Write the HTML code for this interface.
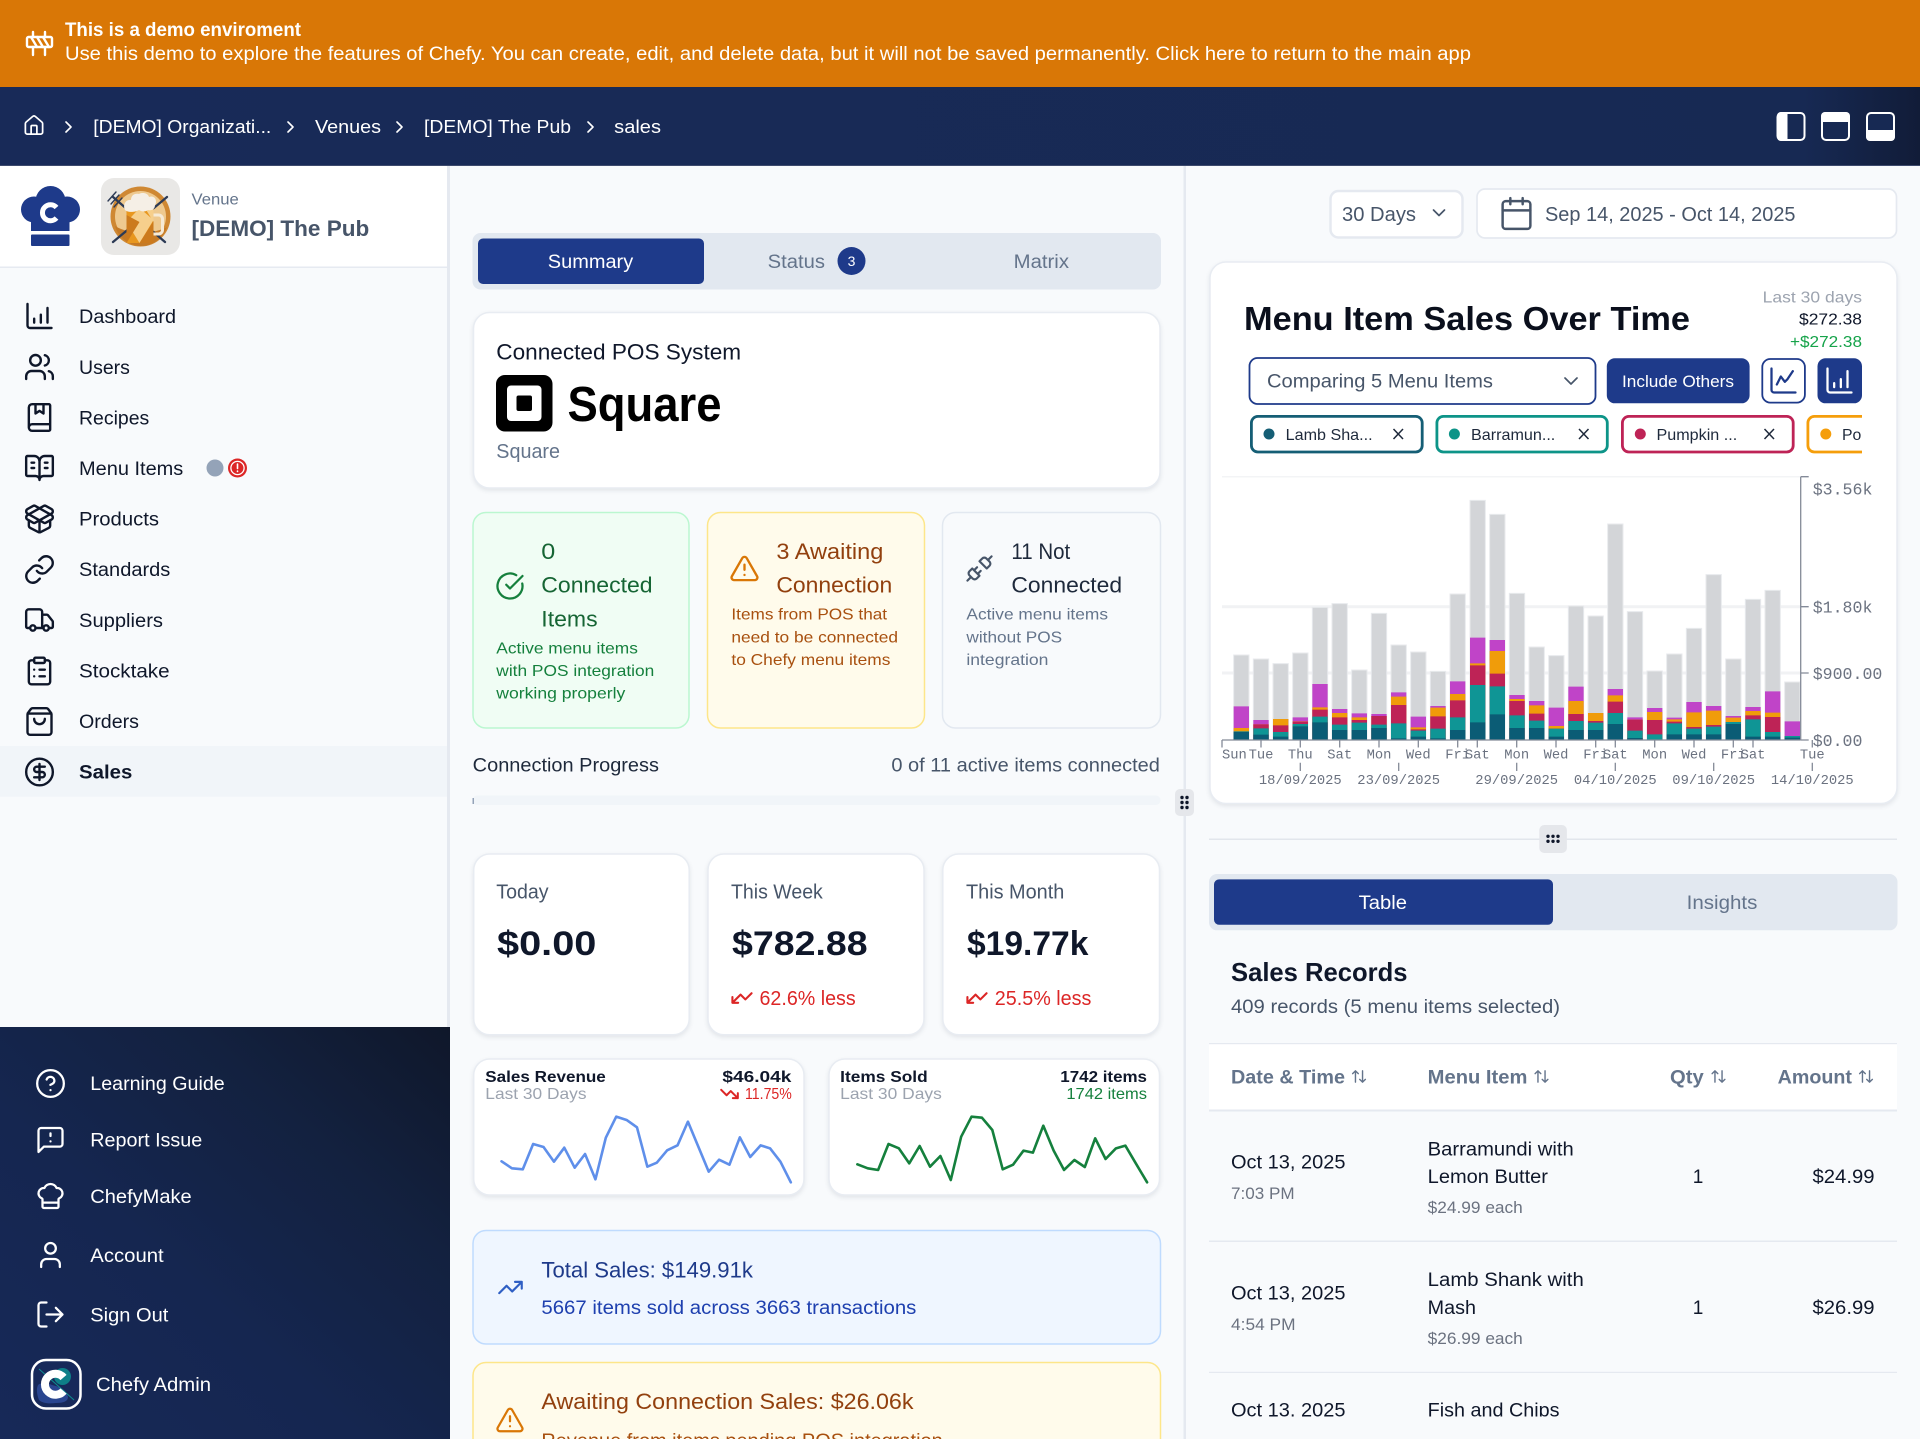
<!DOCTYPE html>
<html lang="en">
<head>
<meta charset="utf-8">
<title>Sales - The Pub</title>
<style>
html,body{margin:0;padding:0;width:1920px;height:1439px;overflow:hidden;background:#f8fafc}
svg{display:block}
text{font-family:"Liberation Sans","Noto Sans CJK SC",sans-serif;white-space:pre}
.m text{font-family:"Liberation Mono",monospace;fill:#6b7280}
.b{font-weight:700}
.i{fill:none;stroke-linecap:round;stroke-linejoin:round}
.card{fill:#fff;stroke:#e8ecf2;stroke-width:1.5;filter:drop-shadow(0 2px 2px rgba(15,23,42,.09))}
</style>
</head>
<body>
<svg xmlns="http://www.w3.org/2000/svg" width="1920" height="1439" viewBox="0 0 1920 1439">
<defs>
<linearGradient id="navg" x1="0" y1="0" x2="1" y2="0"><stop offset="0" stop-color="#182a58"/><stop offset=".94" stop-color="#172953"/><stop offset="1" stop-color="#111c38"/></linearGradient>
<linearGradient id="sideg" x1="0" y1="1" x2="1" y2="0"><stop offset="0" stop-color="#172958"/><stop offset=".4" stop-color="#152650"/><stop offset=".72" stop-color="#13213f"/><stop offset="1" stop-color="#0f172a"/></linearGradient>
<clipPath id="row3"><rect x="1209" y="1380" width="688" height="36.5"/></clipPath>
<clipPath id="chips"><rect x="1240" y="410" width="622" height="50"/></clipPath>
<symbol id="dash" viewBox="0 0 24 24"><path d="M3 3v16a2 2 0 0 0 2 2h16M8 17v-3M13 17v-6M18 17V6"/></symbol>
<symbol id="users" viewBox="0 0 24 24"><path d="M16 21v-2a4 4 0 0 0-4-4H6a4 4 0 0 0-4 4v2"/><circle cx="9" cy="7" r="4"/><path d="M22 21v-2a4 4 0 0 0-3-3.87M16 3.13a4 4 0 0 1 0 7.75"/></symbol>
<symbol id="recipe" viewBox="0 0 24 24"><path d="M9 2v7l3-2 3 2V2"/><path d="M4 19.5v-15A2.5 2.5 0 0 1 6.5 2H19a1 1 0 0 1 1 1v18a1 1 0 0 1-1 1H6.5a1 1 0 0 1 0-5H20"/></symbol>
<symbol id="menu" viewBox="0 0 24 24"><path d="M12 7v14M16 12h2M16 8h2M3 18a1 1 0 0 1-1-1V4a1 1 0 0 1 1-1h5a4 4 0 0 1 4 4 4 4 0 0 1 4-4h5a1 1 0 0 1 1 1v13a1 1 0 0 1-1 1h-6a3 3 0 0 0-3 3 3 3 0 0 0-3-3zM6 12h2M6 8h2"/></symbol>
<symbol id="pkg" viewBox="0 0 24 24"><path d="M12 22v-9"/><path d="M15.17 2.21a1.67 1.67 0 0 1 1.63 0L21 4.57a1.93 1.93 0 0 1 0 3.36L8.82 14.79a1.655 1.655 0 0 1-1.64 0L3 12.43a1.93 1.93 0 0 1 0-3.36z"/><path d="M20 13v3.87a2.06 2.06 0 0 1-1.11 1.83l-6 3.08a1.93 1.93 0 0 1-1.78 0l-6-3.08A2.06 2.06 0 0 1 4 16.87V13"/><path d="M21 12.43a1.93 1.93 0 0 0 0-3.36L8.83 2.2a1.64 1.64 0 0 0-1.63 0L3 4.57a1.93 1.93 0 0 0 0 3.36l12.18 6.86a1.636 1.636 0 0 0 1.63 0z"/></symbol>
<symbol id="link" viewBox="0 0 24 24"><path d="M10 13a5 5 0 0 0 7.54.54l3-3a5 5 0 0 0-7.07-7.07l-1.72 1.71"/><path d="M14 11a5 5 0 0 0-7.54-.54l-3 3a5 5 0 0 0 7.07 7.07l1.71-1.71"/></symbol>
<symbol id="truck" viewBox="0 0 24 24"><path d="M14 18V6a2 2 0 0 0-2-2H4a2 2 0 0 0-2 2v11a1 1 0 0 0 1 1h2M15 18H9M19 18h2a1 1 0 0 0 1-1v-3.65a1 1 0 0 0-.22-.624l-3.48-4.35A1 1 0 0 0 17.52 8H14"/><circle cx="17" cy="18" r="2"/><circle cx="7" cy="18" r="2"/></symbol>
<symbol id="clip" viewBox="0 0 24 24"><rect x="8" y="2" width="8" height="4" rx="1"/><path d="M16 4h2a2 2 0 0 1 2 2v14a2 2 0 0 1-2 2H6a2 2 0 0 1-2-2V6a2 2 0 0 1 2-2h2M12 11h4M12 16h4M8 11h.01M8 16h.01"/></symbol>
<symbol id="bag" viewBox="0 0 24 24"><path d="M16 10a4 4 0 0 1-8 0M3.103 6.034h17.794"/><path d="M3.4 5.467a2 2 0 0 0-.4 1.2V20a2 2 0 0 0 2 2h14a2 2 0 0 0 2-2V6.667a2 2 0 0 0-.4-1.2l-2-2.667A2 2 0 0 0 17 2H7a2 2 0 0 0-1.6.8z"/></symbol>
<symbol id="dollar" viewBox="0 0 24 24"><circle cx="12" cy="12" r="10"/><path d="M16 8h-6a2 2 0 1 0 0 4h4a2 2 0 1 1 0 4H8M12 18V6"/></symbol>
<symbol id="help" viewBox="0 0 24 24"><circle cx="12" cy="12" r="10"/><path d="M9.09 9a3 3 0 0 1 5.83 1c0 2-3 3-3 3M12 17h.01"/></symbol>
<symbol id="report" viewBox="0 0 24 24"><path d="M21 15a2 2 0 0 1-2 2H7l-4 4V5a2 2 0 0 1 2-2h14a2 2 0 0 1 2 2zM12 7v2M12 13h.01"/></symbol>
<symbol id="chef" viewBox="0 0 24 24"><path d="M17 21a1 1 0 0 0 1-1v-5.35c0-.457.316-.844.727-1.041a4 4 0 0 0-2.134-7.589 5 5 0 0 0-9.186 0 4 4 0 0 0-2.134 7.588c.411.198.727.585.727 1.041V20a1 1 0 0 0 1 1ZM6 17h12"/></symbol>
<symbol id="user" viewBox="0 0 24 24"><path d="M19 21v-2a4 4 0 0 0-4-4H9a4 4 0 0 0-4 4v2"/><circle cx="12" cy="7" r="4"/></symbol>
<symbol id="out" viewBox="0 0 24 24"><path d="M9 21H5a2 2 0 0 1-2-2V5a2 2 0 0 1 2-2h4M16 17l5-5-5-5M21 12H9"/></symbol>
<symbol id="home" viewBox="0 0 24 24"><path d="M15 21v-8a1 1 0 0 0-1-1h-4a1 1 0 0 0-1 1v8"/><path d="M3 10a2 2 0 0 1 .709-1.528l7-5.999a2 2 0 0 1 2.582 0l7 5.999A2 2 0 0 1 21 10v9a2 2 0 0 1-2 2H5a2 2 0 0 1-2-2z"/></symbol>
<symbol id="warn" viewBox="0 0 24 24"><path d="M21.73 18l-8-14a2 2 0 0 0-3.48 0l-8 14A2 2 0 0 0 4 21h16a2 2 0 0 0 1.73-3M12 9v4M12 17h.01"/></symbol>
<symbol id="check" viewBox="0 0 24 24"><path d="M21.801 10A10 10 0 1 1 17 3.335M9 11l3 3L22 4"/></symbol>
<symbol id="unplug" viewBox="0 0 24 24"><path d="M19 5l3-3M2 22l3-3M6.3 20.3a2.4 2.4 0 0 0 3.4 0L12 18l-6-6-2.3 2.3a2.4 2.4 0 0 0 0 3.4ZM7.5 13.5L10 11M10.5 16.5L13 14M12 6l6 6 2.3-2.3a2.4 2.4 0 0 0 0-3.4l-2.6-2.6a2.4 2.4 0 0 0-3.4 0Z"/></symbol>
<symbol id="tup" viewBox="0 0 24 24"><path d="M22 7l-8.5 8.5-5-5L2 17M16 7h6v6"/></symbol>
<symbol id="tdl" viewBox="0 0 24 24"><path d="M2 17l8.5-8.5 5 5L22 7M8 17H2v-6"/></symbol>
<symbol id="tdr" viewBox="0 0 24 24"><path d="M22 17l-8.5-8.5-5 5L2 7M16 17h6v-6"/></symbol>
<symbol id="cal" viewBox="0 0 24 24"><path d="M8 2v4M16 2v4M3 10h18"/><rect x="3" y="4" width="18" height="18" rx="2"/></symbol>
<symbol id="lchart" viewBox="0 0 24 24"><path d="M3 3v16a2 2 0 0 0 2 2h16M7 15l3-6 3 4 2-2 4-6"/></symbol>
<symbol id="bchart" viewBox="0 0 24 24"><path d="M3 3v16a2 2 0 0 0 2 2h16M8 17v-3M13 17v-6M18 17V5"/></symbol>
<symbol id="sort" viewBox="0 0 24 24"><path d="M21 16l-4 4-4-4M17 20V4M3 8l4-4 4 4M7 4v16"/></symbol>
</defs>

<!-- page -->
<rect width="1920" height="1439" fill="#f8fafc"/>

<!-- banner -->
<rect width="1920" height="87" fill="#d97706"/>
<g stroke="#fff" fill="none" stroke-width="2.4" stroke-linecap="round" stroke-linejoin="round">
<path d="M33 32v5M45 32v5M33 47v8M45 47v8"/>
<rect x="27" y="37" width="25" height="10" rx="1.5"/>
<path d="M31 37l6 10M37 37l6 10M43 37l6 10"/>
</g>
<text x="65" y="36" font-size="19" fill="#fff" class="b" textLength="236" lengthAdjust="spacingAndGlyphs">This is a demo enviroment</text>
<text x="65" y="60" font-size="19" fill="#fff" textLength="1406" lengthAdjust="spacingAndGlyphs">Use this demo to explore the features of Chefy. You can create, edit, and delete data, but it will not be saved permanently. Click here to return to the main app</text>

<!-- nav -->
<rect y="87" width="1920" height="79" fill="url(#navg)"/>
<rect y="165" width="1920" height="1" fill="#3d4a6d"/>
<use href="#home" x="22.5" y="114" width="23" height="23" class="i" stroke="#fff" stroke-width="1.8"/>
<g class="i" stroke="#fff" stroke-width="1.6">
<path d="M66 122l5 5-5 5M288 122l5 5-5 5M397 122l5 5-5 5M588 122l5 5-5 5"/>
</g>
<g font-size="18.5" fill="#fff">
<text x="93.3" y="133" textLength="178" lengthAdjust="spacingAndGlyphs">[DEMO] Organizati...</text>
<text x="315" y="133" textLength="66" lengthAdjust="spacingAndGlyphs">Venues</text>
<text x="424" y="133" textLength="147" lengthAdjust="spacingAndGlyphs">[DEMO] The Pub</text>
<text x="614.2" y="133" textLength="46.8" lengthAdjust="spacingAndGlyphs">sales</text>
</g>
<g>
<rect x="1777.5" y="113" width="27" height="27" rx="4" fill="#172953" stroke="#fff" stroke-width="2"/>
<path d="M1781 112h6.5v29H1781a4 4 0 0 1-4-4v-21a4 4 0 0 1 4-4z" fill="#fff"/>
<rect x="1822" y="113" width="27" height="27" rx="4" fill="#172953" stroke="#fff" stroke-width="2"/>
<path d="M1825 112h21a4 4 0 0 1 4 4v6h-29v-6a4 4 0 0 1 4-4z" fill="#fff"/>
<rect x="1867" y="113" width="27" height="27" rx="4" fill="#172953" stroke="#fff" stroke-width="2"/>
<path d="M1866 130h29v7a4 4 0 0 1-4 4h-21a4 4 0 0 1-4-4z" fill="#fff"/>
</g>

<!-- sidebar -->
<rect y="166" width="447" height="861" fill="#f8fafc"/>
<rect x="447" y="166" width="3" height="861" fill="#e5e9f0"/>
<rect y="166" width="447" height="101" fill="#fff"/>
<rect y="266.5" width="447" height="1.5" fill="#e6eaf1"/>
<!-- logo -->
<g fill="#1e3a8a">
<circle cx="34" cy="209.5" r="13"/><circle cx="50.5" cy="201" r="15"/><circle cx="67" cy="209.5" r="13"/>
<rect x="31" y="206" width="38.5" height="25"/>
<rect x="31" y="234.5" width="38.5" height="11.5" rx="1"/>
</g>
<path d="M56.5 207.5A8 8 0 1 0 56.5 218" fill="none" stroke="#fff" stroke-width="5"/>
<!-- venue thumbnail -->
<rect x="101" y="178" width="79" height="77" rx="13" fill="#e9e8e6"/>
<circle cx="140.5" cy="216.5" r="30" fill="#cf8833"/>
<circle cx="140.5" cy="216.5" r="25.5" fill="#eec98f"/>
<path d="M115 226c3 11 14 20 26 20s22-8 26-19c-12 7-38 8-52-1z" fill="#c57a26"/>
<g stroke="#2c3a55" stroke-width="2.3" fill="none" stroke-linecap="round">
<path d="M113 197l52 45M167 197l-54 45"/>
<path d="M108 201l8-9M111 204l8-9M114 207l8-9" stroke-width="1.4"/>
</g>
<rect x="126.5" y="208" width="27" height="35" rx="2" fill="#e8971f"/>
<path d="M126.5 222l13-14 14 12-14 23zM145 208h8.5v14z" fill="#f6cf8c"/>
<path d="M126.5 243l13-21-13-7zM153.5 243l-14 0 14-22z" fill="#cc7a1d"/>
<path d="M153.5 215h5a4 4 0 0 1 4 4v11a4 4 0 0 1-4 4h-5" fill="none" stroke="#f6ead6" stroke-width="3"/>
<path d="M125 210c-3-6 2-11 6-10 0-5 4-7 8-6 3-2 9-1 10 3 5-2 9 3 6 8 0 4-3 6-7 5-3 2-6 2-9 0-3 2-11 3-14 0z" fill="#f5efe6"/>
<text x="191.5" y="204.5" font-size="15.5" fill="#64748b" textLength="47.3" lengthAdjust="spacingAndGlyphs">Venue</text>
<text x="191.5" y="236" font-size="22" class="b" fill="#475569" textLength="177.8" lengthAdjust="spacingAndGlyphs">[DEMO] The Pub</text>

<!-- sidebar items -->
<rect y="746" width="447" height="50.7" fill="#f1f5f9"/>
<g class="i" stroke="#0f172a" stroke-width="1.8">
<use href="#dash" x="23.5" y="300" width="32" height="32"/>
<use href="#users" x="23.5" y="351" width="32" height="32"/>
<use href="#recipe" x="23.5" y="401.5" width="32" height="32"/>
<use href="#menu" x="23.5" y="452" width="32" height="32"/>
<use href="#pkg" x="23.5" y="503" width="32" height="32"/>
<use href="#link" x="23.5" y="553.5" width="32" height="32"/>
<use href="#truck" x="23.5" y="604" width="32" height="32"/>
<use href="#clip" x="23.5" y="655" width="32" height="32"/>
<use href="#bag" x="23.5" y="705.5" width="32" height="32"/>
<use href="#dollar" x="23.5" y="756" width="32" height="32"/>
</g>
<g font-size="19" fill="#0f172a">
<text x="79" y="323" textLength="97" lengthAdjust="spacingAndGlyphs">Dashboard</text>
<text x="79" y="373.8" textLength="50.9" lengthAdjust="spacingAndGlyphs">Users</text>
<text x="79" y="424.4" textLength="70.3" lengthAdjust="spacingAndGlyphs">Recipes</text>
<text x="79" y="474.9" textLength="104.3" lengthAdjust="spacingAndGlyphs">Menu Items</text>
<text x="79" y="525.5" textLength="80" lengthAdjust="spacingAndGlyphs">Products</text>
<text x="79" y="576.2" textLength="91.3" lengthAdjust="spacingAndGlyphs">Standards</text>
<text x="79" y="626.8" textLength="84" lengthAdjust="spacingAndGlyphs">Suppliers</text>
<text x="79" y="677.5" textLength="90.6" lengthAdjust="spacingAndGlyphs">Stocktake</text>
<text x="79" y="728" textLength="60" lengthAdjust="spacingAndGlyphs">Orders</text>
<text x="79" y="778.6" class="b" textLength="53.3" lengthAdjust="spacingAndGlyphs">Sales</text>
</g>
<circle cx="215" cy="468" r="8.5" fill="#94a3b8"/>
<circle cx="237.5" cy="468" r="9.5" fill="#dc2626"/>
<circle cx="237.5" cy="468" r="6.6" fill="none" stroke="#fff" stroke-width="1.3"/>
<path d="M237.5 464v4.5M237.5 471v.5" stroke="#fff" stroke-width="1.6" stroke-linecap="round"/>

<!-- sidebar bottom -->
<rect y="1027" width="450" height="412" fill="url(#sideg)"/>
<g class="i" stroke="#fff" stroke-width="1.7">
<use href="#help" x="34.5" y="1067.5" width="32" height="32"/>
<use href="#report" x="34.5" y="1124" width="32" height="32"/>
<use href="#chef" x="34.5" y="1180" width="32" height="32"/>
<use href="#user" x="34.5" y="1239" width="32" height="32"/>
<use href="#out" x="34.5" y="1298.5" width="32" height="32"/>
</g>
<g font-size="19" fill="#fff">
<text x="90.3" y="1090" textLength="134.4" lengthAdjust="spacingAndGlyphs">Learning Guide</text>
<text x="90.3" y="1146.6" textLength="112" lengthAdjust="spacingAndGlyphs">Report Issue</text>
<text x="90.3" y="1202.8" textLength="101.4" lengthAdjust="spacingAndGlyphs">ChefyMake</text>
<text x="90.3" y="1261.8" textLength="73.4" lengthAdjust="spacingAndGlyphs">Account</text>
<text x="90.3" y="1321.3" textLength="78" lengthAdjust="spacingAndGlyphs">Sign Out</text>
<text x="96" y="1391" textLength="115" lengthAdjust="spacingAndGlyphs">Chefy Admin</text>
</g>
<rect x="32" y="1360" width="48.5" height="48.5" rx="14" fill="#17295a" stroke="#fff" stroke-width="2.5"/>
<path d="M38 1385c3-3 10-2 14 0 8 2 14 4 16 12 0 4-4 6-12 6-8 1-14 0-17-3-2-5-3-11-1-15z" fill="#2a4690"/>
<circle cx="62.5" cy="1376.5" r="8.5" fill="#0e7f88"/>
<path d="M39 1369l35 31" stroke="#0e8e90" stroke-width="1"/>
<path d="M63.5 1377.5A10.5 10.5 0 1 0 63.5 1391" fill="none" stroke="#fff" stroke-width="8"/>

<!-- column divider -->
<rect x="1183.5" y="166" width="2.5" height="1273" fill="#e5e9f0"/>
<rect x="1175" y="789" width="19" height="27" rx="5" fill="#e5e7eb"/>
<g fill="#0f172a"><circle cx="1182" cy="797.5" r="1.7"/><circle cx="1187" cy="797.5" r="1.7"/><circle cx="1182" cy="802.5" r="1.7"/><circle cx="1187" cy="802.5" r="1.7"/><circle cx="1182" cy="807.5" r="1.7"/><circle cx="1187" cy="807.5" r="1.7"/></g>

<!-- tabs left -->
<rect x="472.5" y="233" width="688.5" height="56.5" rx="8" fill="#e2e8f0"/>
<rect x="478" y="238.5" width="226" height="45.5" rx="5" fill="#1e3a8a"/>
<g font-size="19">
<text x="547.8" y="268" fill="#fff" textLength="85.4" lengthAdjust="spacingAndGlyphs">Summary</text>
<text x="767.7" y="268" fill="#64748b" textLength="57.3" lengthAdjust="spacingAndGlyphs">Status</text>
<text x="1013.7" y="268" fill="#64748b" textLength="55.3" lengthAdjust="spacingAndGlyphs">Matrix</text>
</g>
<circle cx="851.5" cy="261" r="14" fill="#1e3a8a"/>
<text x="851.5" y="266" font-size="14" fill="#fff" text-anchor="middle">3</text>

<!-- POS card -->
<rect class="card" x="473.5" y="312.5" width="686.5" height="175.5" rx="16"/>
<text x="496.3" y="359.7" font-size="22" fill="#0f172a" textLength="244.8" lengthAdjust="spacingAndGlyphs">Connected POS System</text>
<rect x="496" y="375" width="56.5" height="56.5" rx="9" fill="#000"/>
<rect x="507" y="385.5" width="34.5" height="35.5" rx="4" fill="#fff"/>
<rect x="516.5" y="395.5" width="15.5" height="15.5" rx="2" fill="#000"/>
<text x="567.5" y="421" font-size="49" class="b" fill="#000" textLength="154" lengthAdjust="spacingAndGlyphs">Square</text>
<text x="496.3" y="458" font-size="20" fill="#64748b" textLength="63.7" lengthAdjust="spacingAndGlyphs">Square</text>

<!-- status cards -->
<rect x="473" y="512.5" width="216" height="215.5" rx="13" fill="#f0fdf4" stroke="#bbf7d0" stroke-width="1.5"/>
<rect x="707.5" y="512.5" width="217" height="215.5" rx="13" fill="#fffbeb" stroke="#fde68a" stroke-width="1.5"/>
<rect x="942.5" y="512.5" width="218" height="215.5" rx="13" fill="#f8fafc" stroke="#e2e8f0" stroke-width="1.5"/>
<use href="#check" x="495" y="571" width="30" height="30" class="i" stroke="#15803d" stroke-width="1.8"/>
<use href="#warn" x="729" y="553" width="31" height="31" class="i" stroke="#d97706" stroke-width="1.8"/>
<use href="#unplug" x="965" y="554" width="29" height="29" class="i" stroke="#475569" stroke-width="1.8"/>
<g font-size="22" fill="#166534">
<text x="541.3" y="559" textLength="14" lengthAdjust="spacingAndGlyphs">0</text>
<text x="541.3" y="592.7" textLength="111.3" lengthAdjust="spacingAndGlyphs">Connected</text>
<text x="541.3" y="626.6" textLength="56.3" lengthAdjust="spacingAndGlyphs">Items</text>
</g>
<g font-size="16" fill="#15803d">
<text x="496.3" y="653.7" textLength="141.6" lengthAdjust="spacingAndGlyphs">Active menu items</text>
<text x="496.3" y="676" textLength="158" lengthAdjust="spacingAndGlyphs">with POS integration</text>
<text x="496.3" y="698.7" textLength="129" lengthAdjust="spacingAndGlyphs">working properly</text>
</g>
<g font-size="22" fill="#92400e">
<text x="776.4" y="559" textLength="107" lengthAdjust="spacingAndGlyphs">3 Awaiting</text>
<text x="776.4" y="592.7" textLength="115.9" lengthAdjust="spacingAndGlyphs">Connection</text>
</g>
<g font-size="16" fill="#a8500f">
<text x="731.4" y="619.7" textLength="155.7" lengthAdjust="spacingAndGlyphs">Items from POS that</text>
<text x="731.4" y="642.3" textLength="166.6" lengthAdjust="spacingAndGlyphs">need to be connected</text>
<text x="731.4" y="665" textLength="159" lengthAdjust="spacingAndGlyphs">to Chefy menu items</text>
</g>
<g font-size="22" fill="#1e293b">
<text x="1011.4" y="559" textLength="58.8" lengthAdjust="spacingAndGlyphs">11 Not</text>
<text x="1011.4" y="592.7" textLength="110.7" lengthAdjust="spacingAndGlyphs">Connected</text>
</g>
<g font-size="16" fill="#64748b">
<text x="966.4" y="619.7" textLength="141.6" lengthAdjust="spacingAndGlyphs">Active menu items</text>
<text x="966.4" y="642.3" textLength="95.8" lengthAdjust="spacingAndGlyphs">without POS</text>
<text x="966.4" y="665" textLength="82" lengthAdjust="spacingAndGlyphs">integration</text>
</g>

<!-- progress -->
<text x="472.7" y="771.6" font-size="19" fill="#1e293b" textLength="186.3" lengthAdjust="spacingAndGlyphs">Connection Progress</text>
<text x="891.4" y="771.6" font-size="19" fill="#475569" textLength="268.5" lengthAdjust="spacingAndGlyphs">0 of 11 active items connected</text>
<rect x="472.5" y="795.5" width="688" height="9.5" rx="4.5" fill="#f1f5f9"/>
<rect x="472.5" y="798" width="1.5" height="6" fill="#94a3b8"/>

<!-- stats -->
<rect class="card" x="473.7" y="854" width="215.5" height="180.7" rx="16"/>
<rect class="card" x="708" y="854" width="216" height="180.7" rx="16"/>
<rect class="card" x="942.8" y="854" width="216.7" height="180.7" rx="16"/>
<g font-size="20" fill="#475569">
<text x="496.3" y="898.4" textLength="52.3" lengthAdjust="spacingAndGlyphs">Today</text>
<text x="731" y="898.4" textLength="91.8" lengthAdjust="spacingAndGlyphs">This Week</text>
<text x="966" y="898.4" textLength="98.3" lengthAdjust="spacingAndGlyphs">This Month</text>
</g>
<g font-size="34" class="b" fill="#0f172a">
<text x="497" y="955" textLength="99.4" lengthAdjust="spacingAndGlyphs">$0.00</text>
<text x="732" y="955" textLength="135.6" lengthAdjust="spacingAndGlyphs">$782.88</text>
<text x="967" y="955" textLength="121.4" lengthAdjust="spacingAndGlyphs">$19.77k</text>
</g>
<use href="#tdl" x="730.5" y="986.5" width="23" height="23" class="i" stroke="#dc2626" stroke-width="2.2"/>
<use href="#tdl" x="965.5" y="986.5" width="23" height="23" class="i" stroke="#dc2626" stroke-width="2.2"/>
<g font-size="20" fill="#dc2626">
<text x="759.5" y="1005" textLength="96.2" lengthAdjust="spacingAndGlyphs">62.6% less</text>
<text x="994.8" y="1005" textLength="96.6" lengthAdjust="spacingAndGlyphs">25.5% less</text>
</g>

<!-- spark cards -->
<rect class="card" x="473.7" y="1059" width="330.3" height="136" rx="16"/>
<rect class="card" x="829" y="1059" width="330.5" height="136" rx="16"/>
<g font-size="16">
<text x="485.3" y="1082" class="b" fill="#0f172a" textLength="120.5" lengthAdjust="spacingAndGlyphs">Sales Revenue</text>
<text x="485.3" y="1099" fill="#9ca3af" textLength="101.2" lengthAdjust="spacingAndGlyphs">Last 30 Days</text>
<text x="722.4" y="1082" class="b" fill="#0f172a" textLength="69" lengthAdjust="spacingAndGlyphs">$46.04k</text>
<text x="745" y="1099" fill="#dc2626" textLength="46.8" lengthAdjust="spacingAndGlyphs">11.75%</text>
<text x="840.2" y="1082" class="b" fill="#0f172a" textLength="87.5" lengthAdjust="spacingAndGlyphs">Items Sold</text>
<text x="840.2" y="1099" fill="#9ca3af" textLength="101.6" lengthAdjust="spacingAndGlyphs">Last 30 Days</text>
<text x="1060.3" y="1082" class="b" fill="#0f172a" textLength="86.7" lengthAdjust="spacingAndGlyphs">1742 items</text>
<text x="1066.4" y="1099" fill="#15803d" textLength="80.6" lengthAdjust="spacingAndGlyphs">1742 items</text>
</g>
<use href="#tdr" x="719.5" y="1084" width="20" height="20" class="i" stroke="#dc2626" stroke-width="2.4"/>
<g transform="translate(460 840) scale(.47191 .33333)" fill="none" stroke-linejoin="round" stroke-linecap="round">
<polyline vector-effect="non-scaling-stroke" stroke="#5f8fea" stroke-width="2.6" points="88,964 110,985 133,988 155,912 177,921 199,965 221,923 243,983 265,942 287,1018 309,893 331,830 353,840 375,862 397,980 417,968 439,931 461,916 483,845 505,920 527,995 549,959 571,974 593,892 615,951 637,916 657,925 679,965 701,1027"/>
<polyline vector-effect="non-scaling-stroke" stroke="#15803d" stroke-width="2.6" points="842,973 864,985 886,990 908,912 930,925 952,970 974,918 996,980 1018,948 1040,1020 1062,890 1084,830 1106,833 1128,870 1150,988 1172,974 1194,932 1214,938 1236,857 1258,932 1280,990 1302,960 1324,981 1346,895 1368,957 1390,925 1410,917 1432,970 1456,1027"/>
</g>

<!-- info cards -->
<rect x="473" y="1230.5" width="687.5" height="113.5" rx="13" fill="#eff6ff" stroke="#bfdbfe" stroke-width="1.5"/>
<use href="#tup" x="497" y="1274" width="27" height="27" class="i" stroke="#2f5fc4" stroke-width="1.9"/>
<text x="541.4" y="1277.5" font-size="22" fill="#1e3a8a" textLength="211.6" lengthAdjust="spacingAndGlyphs">Total Sales: $149.91k</text>
<text x="541.4" y="1314.2" font-size="19" fill="#1e40af" textLength="375" lengthAdjust="spacingAndGlyphs">5667 items sold across 3663 transactions</text>
<rect x="473" y="1362.5" width="687.5" height="110" rx="13" fill="#fffbeb" stroke="#fde68a" stroke-width="1.5"/>
<use href="#warn" x="495" y="1405" width="30" height="30" class="i" stroke="#d97706" stroke-width="1.8"/>
<text x="541.4" y="1409" font-size="22" fill="#92400e" textLength="372.1" lengthAdjust="spacingAndGlyphs">Awaiting Connection Sales: $26.06k</text>
<text x="541.4" y="1447" font-size="19" fill="#a8500f" textLength="401.3" lengthAdjust="spacingAndGlyphs">Revenue from items pending POS integration</text>

<!-- right: date controls -->
<rect x="1330.5" y="191" width="132" height="46.5" rx="8" fill="#fff" stroke="#e5e9f0" stroke-width="2.5"/>
<text x="1342" y="221" font-size="20" fill="#475569" textLength="74" lengthAdjust="spacingAndGlyphs">30 Days</text>
<path d="M1433.5 210l5.5 5.5 5.5-5.5" class="i" stroke="#475569" stroke-width="1.7"/>
<rect x="1477" y="189" width="419.5" height="49" rx="8" fill="#fff" stroke="#e5e9f0" stroke-width="1.7"/>
<use href="#cal" x="1498" y="195" width="37" height="37" class="i" stroke="#475569" stroke-width="1.6"/>
<text x="1545" y="221" font-size="20" fill="#475569" textLength="250.5" lengthAdjust="spacingAndGlyphs">Sep 14, 2025 - Oct 14, 2025</text>

<!-- right: chart card -->
<rect class="card" x="1210" y="262" width="687" height="541.5" rx="16"/>
<text x="1244" y="330" font-size="33.5" class="b" fill="#0a0f1c" textLength="446" lengthAdjust="spacingAndGlyphs">Menu Item Sales Over Time</text>
<text x="1762.7" y="302.3" font-size="16" fill="#9ca3af" textLength="99.3" lengthAdjust="spacingAndGlyphs">Last 30 days</text>
<text x="1799" y="324.5" font-size="16" fill="#0f172a" textLength="63" lengthAdjust="spacingAndGlyphs">$272.38</text>
<text x="1790" y="347" font-size="16" fill="#16a34a" textLength="72" lengthAdjust="spacingAndGlyphs">+$272.38</text>

<rect x="1249.5" y="358" width="346" height="46" rx="8" fill="#fff" stroke="#1e3a8a" stroke-width="1.8"/>
<text x="1267" y="387.6" font-size="19" fill="#475569" textLength="226" lengthAdjust="spacingAndGlyphs">Comparing 5 Menu Items</text>
<path d="M1565 378l6 6 6-6" class="i" stroke="#475569" stroke-width="1.7"/>
<rect x="1606.8" y="358.3" width="142.8" height="45" rx="8" fill="#1e3a8a"/>
<text x="1622" y="387" font-size="16.5" fill="#fff" textLength="112" lengthAdjust="spacingAndGlyphs">Include Others</text>
<rect x="1762.3" y="359" width="42.6" height="43.6" rx="8" fill="#fff" stroke="#1e3a8a" stroke-width="1.8"/>
<use href="#lchart" x="1767.5" y="364.5" width="32" height="32" class="i" stroke="#1e3a8a" stroke-width="1.7"/>
<rect x="1817.5" y="358.3" width="44.5" height="45" rx="8" fill="#1e3a8a"/>
<use href="#bchart" x="1823.5" y="364.5" width="32" height="32" class="i" stroke="#fff" stroke-width="1.7"/>

<g clip-path="url(#chips)">
<g fill="#fff" stroke-width="2.8">
<rect x="1251.4" y="416.4" width="170.8" height="35.6" rx="6.5" stroke="#155e75"/>
<rect x="1436.9" y="416.4" width="170.4" height="35.6" rx="6.5" stroke="#0d9488"/>
<rect x="1622.4" y="416.4" width="170.8" height="35.6" rx="6.5" stroke="#be2356"/>
<rect x="1807.9" y="416.4" width="170.8" height="35.6" rx="6.5" stroke="#f59e0b"/>
</g>
<circle cx="1269" cy="434" r="5.5" fill="#155e75"/>
<circle cx="1454.4" cy="434" r="5.5" fill="#0d9488"/>
<circle cx="1640.3" cy="434" r="5.5" fill="#be2356"/>
<circle cx="1825.8" cy="434" r="5.5" fill="#f59e0b"/>
<g font-size="16" fill="#1e293b">
<text x="1285.7" y="439.8" textLength="86.9" lengthAdjust="spacingAndGlyphs">Lamb Sha...</text>
<text x="1471" y="439.8" textLength="84.3" lengthAdjust="spacingAndGlyphs">Barramun...</text>
<text x="1656.5" y="439.8" textLength="80.7" lengthAdjust="spacingAndGlyphs">Pumpkin ...</text>
<text x="1842" y="439.8" textLength="19.3" lengthAdjust="spacingAndGlyphs">Po</text>
</g>
<path d="M1393.5 429l9.5 10M1403 429l-9.5 10M1579 429l9.5 10M1588.5 429l-9.5 10M1764.5 429l9.5 10M1774 429l-9.5 10" stroke="#1e293b" stroke-width="1.5" fill="none"/>
</g>

<!-- chart -->
<g stroke="#f3f4f6" stroke-width="1.5"><path d="M1222 476.7H1800"/></g>
<g stroke="#f1f2f4" stroke-width="3"><path d="M1222 606.7H1800M1222 673H1800"/></g>
<g transform="translate(1210 470) scale(.33333)">
<path fill="#d3d5d8" stroke="#e8eaed" stroke-width="3" d="M71 555h46V810h-46zM130 567h46V810h-46zM189 581h46V810h-46zM248 549h46V810h-46zM307 412h46V810h-46zM366 401h46V810h-46zM425 600h46V810h-46zM484 430h46V810h-46zM543 525h46V810h-46zM602 546h46V810h-46zM661 604h46V810h-46zM720 372h46V810h-46zM780 91h46V810h-46zM839 133h46V810h-46zM898 370h46V810h-46zM957 531h46V810h-46zM1016 557h46V810h-46zM1075 408h46V810h-46zM1134 438h46V810h-46zM1193 162h46V810h-46zM1252 425h46V810h-46zM1311 603h46V810h-46zM1370 552h46V810h-46zM1429 475h46V810h-46zM1488 314h46V810h-46zM1547 567h46V810h-46zM1606 388h46V810h-46zM1665 361h46V810h-46zM1724 636h46V810h-46z"/>
<path fill="#c044c8" d="M71 709h46V810h-46zM130 750h46V810h-46zM189 747h46V810h-46zM248 742h46V810h-46zM307 642h46V810h-46zM366 717h46V810h-46zM425 730h46V810h-46zM484 732h46V810h-46zM543 667h46V810h-46zM602 740h46V810h-46zM661 708h46V810h-46zM720 634h46V810h-46zM780 503h46V810h-46zM839 510h46V810h-46zM898 675h46V810h-46zM957 693h46V810h-46zM1016 713h46V810h-46zM1075 650h46V810h-46zM1134 729h46V810h-46zM1193 657h46V810h-46zM1252 742h46V810h-46zM1311 714h46V810h-46zM1370 743h46V810h-46zM1429 696h46V810h-46zM1488 708h46V810h-46zM1547 738h46V810h-46zM1606 711h46V810h-46zM1665 664h46V810h-46zM1724 754h46V810h-46z"/>
<path fill="#f09c0a" d="M71 774h46V810h-46zM130 763h46V810h-46zM189 747h46V810h-46zM248 754h46V810h-46zM307 712h46V810h-46zM366 729h46V810h-46zM425 742h46V810h-46zM484 738h46V810h-46zM543 680h46V810h-46zM602 772h46V810h-46zM661 713h46V810h-46zM720 672h46V810h-46zM780 580h46V810h-46zM839 543h46V810h-46zM898 687h46V810h-46zM957 706h46V810h-46zM1016 768h46V810h-46zM1075 693h46V810h-46zM1134 729h46V810h-46zM1193 676h46V810h-46zM1252 749h46V810h-46zM1311 726h46V810h-46zM1370 748h46V810h-46zM1429 727h46V810h-46zM1488 722h46V810h-46zM1547 743h46V810h-46zM1606 723h46V810h-46zM1665 728h46V810h-46zM1724 798h46V810h-46z"/>
<path fill="#be2356" d="M71 784h46V810h-46zM130 763h46V810h-46zM189 766h46V810h-46zM248 755h46V810h-46zM307 719h46V810h-46zM366 742h46V810h-46zM425 750h46V810h-46zM484 738h46V810h-46zM543 705h46V810h-46zM602 778h46V810h-46zM661 739h46V810h-46zM720 691h46V810h-46zM780 586h46V810h-46zM839 611h46V810h-46zM898 693h46V810h-46zM957 731h46V810h-46zM1016 776h46V810h-46zM1075 732h46V810h-46zM1134 753h46V810h-46zM1193 695h46V810h-46zM1252 749h46V810h-46zM1311 750h46V810h-46zM1370 755h46V810h-46zM1429 771h46V810h-46zM1488 765h46V810h-46zM1547 756h46V810h-46zM1606 736h46V810h-46zM1665 741h46V810h-46zM1724 798h46V810h-46z"/>
<path fill="#0f9595" d="M71 784h46V810h-46zM130 775h46V810h-46zM189 786h46V810h-46zM248 762h46V810h-46zM307 740h46V810h-46zM366 764h46V810h-46zM425 758h46V810h-46zM484 764h46V810h-46zM543 760h46V810h-46zM602 782h46V810h-46zM661 776h46V810h-46zM720 742h46V810h-46zM780 645h46V810h-46zM839 649h46V810h-46zM898 736h46V810h-46zM957 752h46V810h-46zM1016 776h46V810h-46zM1075 753h46V810h-46zM1134 758h46V810h-46zM1193 729h46V810h-46zM1252 782h46V810h-46zM1311 793h46V810h-46zM1370 760h46V810h-46zM1429 776h46V810h-46zM1488 770h46V810h-46zM1547 756h46V810h-46zM1606 748h46V810h-46zM1665 786h46V810h-46zM1724 798h46V810h-46z"/>
<path fill="#0b5c75" d="M71 786h46V810h-46zM130 794h46V810h-46zM189 800h46V810h-46zM248 769h46V810h-46zM307 757h46V810h-46zM366 780h46V810h-46zM425 780h46V810h-46zM484 774h46V810h-46zM543 805h46V810h-46zM602 800h46V810h-46zM661 805h46V810h-46zM720 780h46V810h-46zM780 757h46V810h-46zM839 733h46V810h-46zM898 774h46V810h-46zM957 774h46V810h-46zM1016 800h46V810h-46zM1075 780h46V810h-46zM1134 780h46V810h-46zM1193 762h46V810h-46zM1252 804h46V810h-46zM1370 793h46V810h-46zM1429 793h46V810h-46zM1488 793h46V810h-46zM1547 762h46V810h-46zM1606 800h46V810h-46zM1665 800h46V810h-46zM1724 803h46V810h-46z"/>
</g>
<g stroke="#848a98" fill="none" stroke-width="1.3">
<path d="M1800.7 476.7V740M1800.7 476.7h8M1800.7 606.7h8M1800.7 673h8M1800.7 740h8"/>
<path d="M1222 740H1800.7"/>
<path d="M1222 740v7.5M1261 740v7.5M1300.3 740v7.5M1339.7 740v7.5M1379 740v7.5M1418.3 740v7.5M1457.7 740v7.5M1477.3 740v7.5M1516.7 740v7.5M1556 740v7.5M1595.7 740v7.5M1615.3 740v7.5M1654.7 740v7.5M1694 740v7.5M1733.3 740v7.5M1753 740v7.5M1812.3 740v7.5"/>
<path d="M1300.3 762.7v8.3M1398.7 762.7v8.3M1516.7 762.7v8.3M1615.3 762.7v8.3M1713.7 762.7v8.3M1812.3 762.7v8.3"/>
</g>
<g class="m" font-size="16.6">
<text x="1812.7" y="494.5">$3.56k</text>
<text x="1812.7" y="612.5">$1.80k</text>
<text x="1812.7" y="679">$900.00</text>
<text x="1812.7" y="746">$0.00</text>
</g>
<g class="m" font-size="13.8" text-anchor="middle">
<text x="1222" y="758.5" text-anchor="start">Sun</text>
<text x="1261" y="758.5">Tue</text><text x="1300.3" y="758.5">Thu</text><text x="1339.7" y="758.5">Sat</text><text x="1379" y="758.5">Mon</text><text x="1418.3" y="758.5">Wed</text><text x="1457.7" y="758.5">Fri</text><text x="1477.3" y="758.5">Sat</text><text x="1516.7" y="758.5">Mon</text><text x="1556" y="758.5">Wed</text><text x="1595.7" y="758.5">Fri</text><text x="1615.3" y="758.5">Sat</text><text x="1654.7" y="758.5">Mon</text><text x="1694" y="758.5">Wed</text><text x="1733.3" y="758.5">Fri</text><text x="1753" y="758.5">Sat</text><text x="1812.3" y="758.5">Tue</text>
<text x="1300.3" y="784">18/09/2025</text><text x="1398.7" y="784">23/09/2025</text><text x="1516.7" y="784">29/09/2025</text><text x="1615.3" y="784">04/10/2025</text><text x="1713.7" y="784">09/10/2025</text><text x="1812.3" y="784">14/10/2025</text>
</g>

<!-- horizontal divider -->
<rect x="1209" y="838.5" width="688" height="1.5" fill="#e2e6ec"/>
<rect x="1539.3" y="825" width="27.6" height="28" rx="5" fill="#e5e7eb"/>
<g fill="#0f172a"><circle cx="1548" cy="836.3" r="1.7"/><circle cx="1553" cy="836.3" r="1.7"/><circle cx="1558" cy="836.3" r="1.7"/><circle cx="1548" cy="841.3" r="1.7"/><circle cx="1553" cy="841.3" r="1.7"/><circle cx="1558" cy="841.3" r="1.7"/></g>

<!-- table tabs -->
<rect x="1209" y="874" width="688.5" height="56.3" rx="8" fill="#e2e8f0"/>
<rect x="1214" y="879.4" width="339" height="45.3" rx="5" fill="#1e3a8a"/>
<text x="1358.7" y="909" font-size="19" fill="#fff" textLength="48.3" lengthAdjust="spacingAndGlyphs">Table</text>
<text x="1686.7" y="909" font-size="19" fill="#64748b" textLength="70.7" lengthAdjust="spacingAndGlyphs">Insights</text>

<text x="1231" y="981" font-size="26" class="b" fill="#0f172a" textLength="176.5" lengthAdjust="spacingAndGlyphs">Sales Records</text>
<text x="1231" y="1013" font-size="19" fill="#475569" textLength="329" lengthAdjust="spacingAndGlyphs">409 records (5 menu items selected)</text>

<!-- table head -->
<rect x="1209" y="1043.5" width="688" height="67.3" fill="#fff"/>
<rect x="1209" y="1043" width="688" height="1.2" fill="#e5e9f0"/>
<rect x="1209" y="1109.5" width="688" height="2" fill="#e5e9f0"/>
<g font-size="19" class="b" fill="#64748b">
<text x="1231" y="1083.6" textLength="114" lengthAdjust="spacingAndGlyphs">Date &amp; Time</text>
<text x="1427.7" y="1083.6" textLength="99.7" lengthAdjust="spacingAndGlyphs">Menu Item</text>
<text x="1670" y="1083.6" textLength="33.7" lengthAdjust="spacingAndGlyphs">Qty</text>
<text x="1777.6" y="1083.6" textLength="74.4" lengthAdjust="spacingAndGlyphs">Amount</text>
</g>
<g class="i" stroke="#64748b" stroke-width="2">
<use href="#sort" x="1350.5" y="1068" width="17" height="17"/>
<use href="#sort" x="1533" y="1068" width="17" height="17"/>
<use href="#sort" x="1710" y="1068" width="17" height="17"/>
<use href="#sort" x="1857.5" y="1068" width="17" height="17"/>
</g>

<!-- rows -->
<g font-size="19" fill="#0f172a">
<text x="1231" y="1168.7" textLength="114.5" lengthAdjust="spacingAndGlyphs">Oct 13, 2025</text>
<text x="1427.7" y="1155.6" textLength="146" lengthAdjust="spacingAndGlyphs">Barramundi with</text>
<text x="1427.7" y="1183.2" textLength="120.3" lengthAdjust="spacingAndGlyphs">Lemon Butter</text>
<text x="1698" y="1183.2" text-anchor="middle">1</text>
<text x="1812.5" y="1183.2" textLength="62" lengthAdjust="spacingAndGlyphs">$24.99</text>
<text x="1231" y="1299.7" textLength="114.5" lengthAdjust="spacingAndGlyphs">Oct 13, 2025</text>
<text x="1427.7" y="1286" textLength="156.1" lengthAdjust="spacingAndGlyphs">Lamb Shank with</text>
<text x="1427.7" y="1314" textLength="48.3" lengthAdjust="spacingAndGlyphs">Mash</text>
<text x="1698" y="1314" text-anchor="middle">1</text>
<text x="1812.5" y="1314" textLength="62" lengthAdjust="spacingAndGlyphs">$26.99</text>
</g>
<g font-size="17" fill="#6b7280">
<text x="1231" y="1199" textLength="63.6" lengthAdjust="spacingAndGlyphs">7:03 PM</text>
<text x="1427.7" y="1213" textLength="95.1" lengthAdjust="spacingAndGlyphs">$24.99 each</text>
<text x="1231" y="1330" textLength="64.5" lengthAdjust="spacingAndGlyphs">4:54 PM</text>
<text x="1427.7" y="1344" textLength="95.1" lengthAdjust="spacingAndGlyphs">$26.99 each</text>
</g>
<rect x="1209" y="1240.5" width="688" height="1.5" fill="#e5e9f0"/>
<rect x="1209" y="1371.8" width="688" height="1.2" fill="#e5e9f0"/>
<g clip-path="url(#row3)" font-size="19" fill="#0f172a">
<text x="1231" y="1416.4" textLength="114.5" lengthAdjust="spacingAndGlyphs">Oct 13, 2025</text>
<text x="1427.7" y="1416.4" textLength="131.8" lengthAdjust="spacingAndGlyphs">Fish and Chips</text>
</g>
</svg>
</body>
</html>
